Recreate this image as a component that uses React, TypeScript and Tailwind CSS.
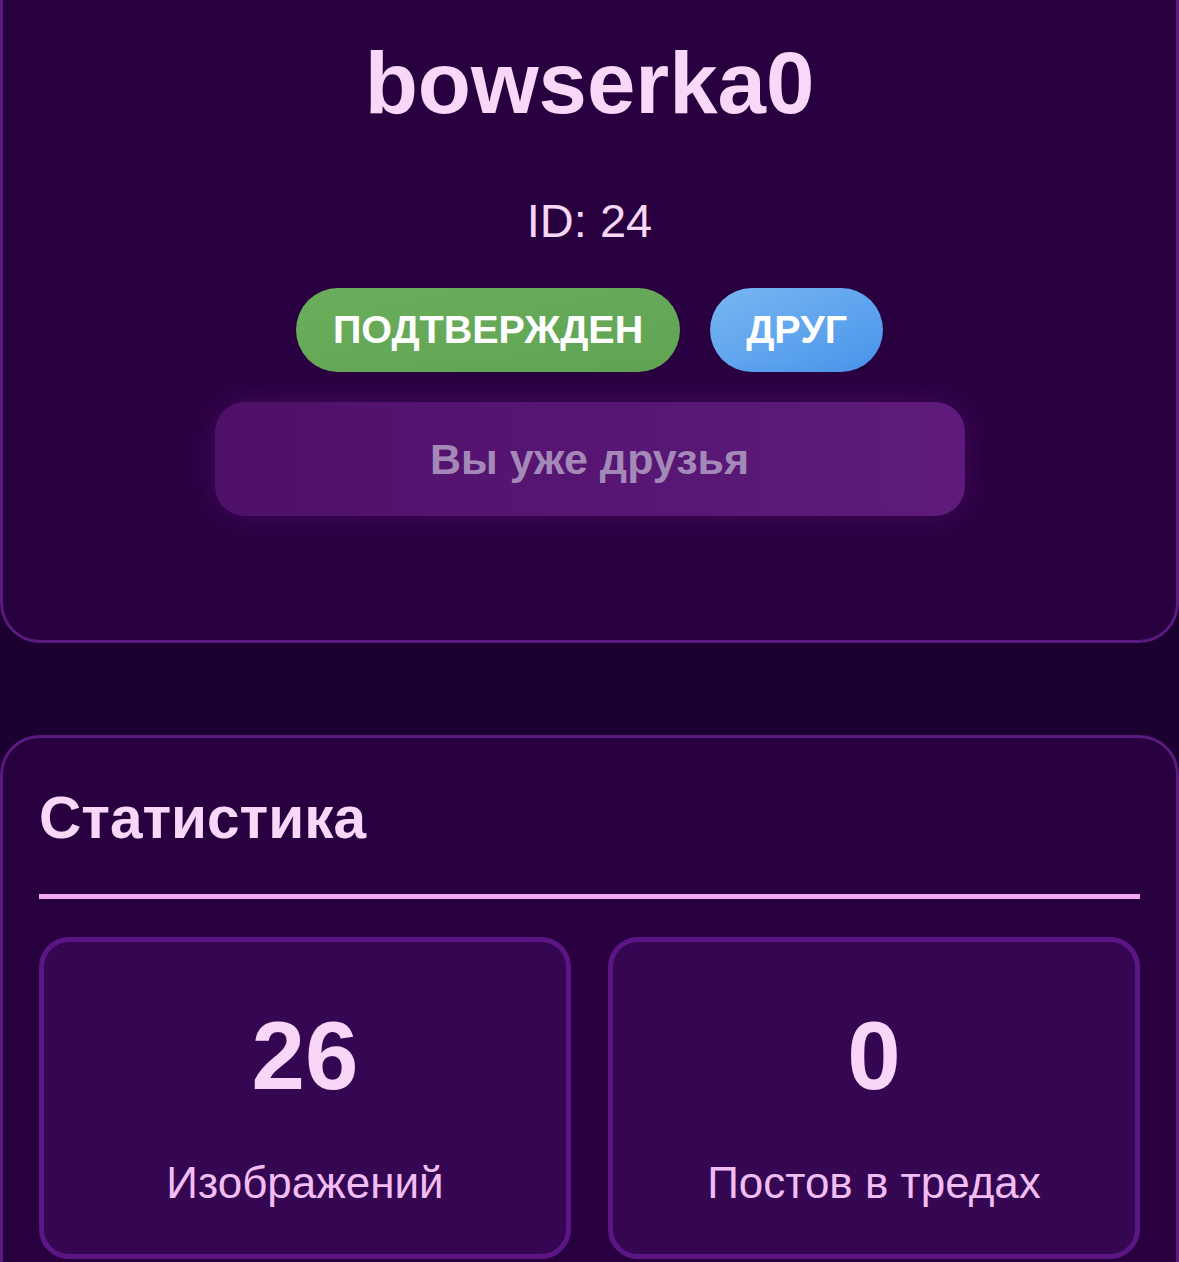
import React from 'react';

type Stat = { value: number; label: string };

const STATS: Stat[] = [
  { value: 26, label: 'Изображений' },
  { value: 0, label: 'Постов в тредах' },
];

function StatCard({ stat }: { stat: Stat }) {
  return (
    <div className="flex flex-col items-center rounded-[30px] border-[5px] border-[#5c1584] bg-[#350752] pt-[59px] pb-[45px]">
      <div className="text-[96px] font-bold leading-[110px] text-[#f8d6f8]">{stat.value}</div>
      <div className="mt-[46px] text-[44px] leading-[52px] text-[#f2bdf2]">{stat.label}</div>
    </div>
  );
}

export default function App() {
  return (
    <div
      className="min-h-screen bg-[#1c0031] pb-[40px]"
      style={{ fontFamily: '"Liberation Sans", Arial, sans-serif' }}
    >
      {/* Profile card */}
      <div className="flex flex-col items-center rounded-b-[40px] border-x-[3px] border-b-[3px] border-[#5a1a80] bg-[#29003f] pt-[33px] pb-[124px]">
        <h1 className="text-[87px] font-bold leading-[100px] text-[#f8d8f8]">bowserka0</h1>
        <p className="mt-[60px] text-[47px] leading-[56px] text-[#f6d8f6]">ID: 24</p>
        <div className="mt-[39px] flex gap-[30px]">
          <span className="flex h-[84px] items-center rounded-full bg-gradient-to-br from-[#6aae5c] to-[#60a454] px-[37px] text-[39.5px] font-bold uppercase text-white">
            Подтвержден
          </span>
          <span className="flex h-[84px] items-center rounded-full bg-gradient-to-br from-[#78b6f2] to-[#4894ea] px-[36px] text-[39.5px] font-bold uppercase text-white">
            Друг
          </span>
        </div>
        <button
          disabled
          className="mt-[30px] flex h-[114px] w-[750px] items-center justify-center rounded-[30px] bg-gradient-to-r from-[#4f1069] to-[#5e1b7c] text-[43px] font-bold text-[#a489b8] shadow-[0_0_36px_rgba(110,30,150,0.35)]"
        >
          Вы уже друзья
        </button>
      </div>

      {/* Stats */}
      <div className="mt-[92px] rounded-[40px] border-[3px] border-[#5a1a80] bg-[#29003f] px-[36px] pt-[46px] pb-[60px]">
        <h2 className="border-b-[5px] border-[#f0a8f6] pb-[42px] text-[58.5px] font-bold leading-[68px] text-[#f8d8f8]">
          Статистика
        </h2>
        <div className="mt-[38px] grid grid-cols-2 gap-[37px]">
          {STATS.map((s) => (
            <StatCard key={s.label} stat={s} />
          ))}
        </div>
      </div>
    </div>
  );
}
